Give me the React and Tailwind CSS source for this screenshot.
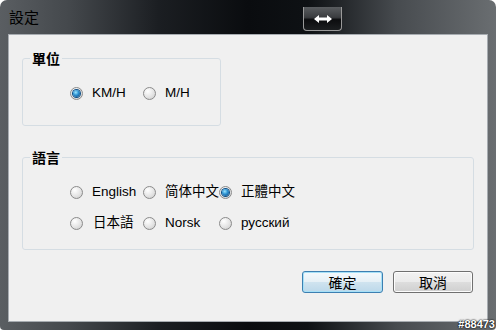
import { useState } from "react";

const latin = { fontFamily: '"Liberation Sans", "Noto Sans CJK TC", sans-serif' };
const cjk = { fontFamily: '"Noto Sans CJK TC", "Liberation Sans", sans-serif' };

function Radio({ checked }) {
    return (
        <span className="w-[13px] h-[13px] shrink-0 rounded-full border border-[#8b8b8b] bg-[radial-gradient(circle_at_35%_30%,#ffffff,#e4e4e4_55%,#c9c9c9)] flex items-center justify-center">
            {checked && (
                <span className="w-[7px] h-[7px] rounded-full bg-[radial-gradient(circle_at_40%_35%,#9be6ff,#2a8fd0_45%,#0b3f74)] shadow-[0_0_0_1px_#0e4f86]" />
            )}
        </span>
    );
}

function Option({ label, checked, onClick, gap = "gap-[9px]" }) {
    return (
        <div className={`flex items-center ${gap} h-4 cursor-default`} onClick={onClick}>
            <Radio checked={checked} />
            <span className="text-[13.5px] leading-4 text-black whitespace-nowrap">{label}</span>
        </div>
    );
}

export default function App() {
    const [unit, setUnit] = useState("KM/H");
    const [lang, setLang] = useState("正體中文");
    const langs = ["English", "简体中文", "正體中文", "日本語", "Norsk", "русский"];

    return (
        <div className="w-[496px] h-[330px] bg-white" style={latin}>
            <div className="relative w-[496px] h-[330px] rounded-t-[7px] rounded-b-[4px] overflow-hidden bg-[linear-gradient(90deg,#5a5e62_0%,#44484c_14%,#1b1e22_32%,#0a0c0f_50%,#0e1114_62%,#474b4f_80%,#6a6e71_100%)] flex flex-col">
                {/* title bar */}
                <div className="h-[34px] flex items-start pl-[9px] shrink-0">
                    <span className="mt-[8px] text-[15px] leading-[18px] text-black" style={cjk}>
                        設定
                    </span>
                    <div className="ml-auto mr-[154px] mt-[7px] w-[39px] h-[24px] rounded-b-[4px] border border-t-0 border-[#9a9a9a] bg-[linear-gradient(180deg,#5a5d60_0%,#3a3c3f_45%,#0c0d0f_55%,#1c1e20_100%)] flex items-center justify-center">
                        <svg width="20" height="10" viewBox="0 0 20 10">
                            <path d="M1 5 L6 1 L6 3.5 L14 3.5 L14 1 L19 5 L14 9 L14 6.5 L6 6.5 L6 9 Z" fill="#ffffff" />
                        </svg>
                    </div>
                </div>

                {/* client area */}
                <div className="mx-[8px] h-[288px] border border-[#a7acb1] bg-[#f0f0f0] flex flex-col">
                    <fieldset className="ml-[13px] mt-[15px] w-[199px] border border-[#d5dde3] rounded-[3px] px-[7px]">
                        <legend className="px-[2px] text-[14px] leading-4 font-bold text-black" style={cjk}>
                            單位
                        </legend>
                        <div className="grid grid-cols-[73px_auto] pt-[19px] pb-[24px] pl-[40px]">
                            {["KM/H", "M/H"].map((u) => (
                                <Option key={u} label={u} checked={unit === u} onClick={() => setUnit(u)} />
                            ))}
                        </div>
                    </fieldset>

                    <fieldset className="ml-[13px] mt-[23px] w-[452px] border border-[#d5dde3] rounded-[3px] px-[7px]">
                        <legend className="px-[2px] text-[14px] leading-4 font-bold text-black" style={cjk}>
                            語言
                        </legend>
                        <div className="grid grid-cols-[73px_76px_auto] gap-y-[15px] pt-[19px] pb-[18px] pl-[40px]">
                            {langs.map((l) => (
                                <Option
                                    key={l}
                                    label={l}
                                    checked={lang === l}
                                    onClick={() => setLang(l)}
                                    gap={l === "日本語" ? "gap-[10px]" : "gap-[9px]"}
                                />
                            ))}
                        </div>
                    </fieldset>

                    <div className="mt-[21px] flex justify-end gap-[10px] pr-[14px]" style={cjk}>
                        <button className="w-[81px] h-[22px] rounded-[3px] border border-[#3c7fb1] shadow-[inset_0_0_0_1px_#a6e0f7] bg-[linear-gradient(180deg,#f4f9fc_0%,#e6f0f6_48%,#cfe3ef_52%,#bcd8ea_100%)] text-[14px] leading-4 text-black">
                            確定
                        </button>
                        <button className="w-[80px] h-[22px] rounded-[3px] border border-[#707070] shadow-[inset_0_0_0_1px_#fcfcfc] bg-[linear-gradient(180deg,#f2f2f2_0%,#ebebeb_48%,#dddddd_52%,#cfcfcf_100%)] text-[14px] leading-4 text-black">
                            取消
                        </button>
                    </div>
                </div>

                <span className="absolute right-[1px] bottom-[-1px] text-[11px] leading-[13px] font-bold text-white [text-shadow:0_0_2px_#000,0_0_1px_#000]">
                    #88473
                </span>
            </div>
        </div>
    );
}
